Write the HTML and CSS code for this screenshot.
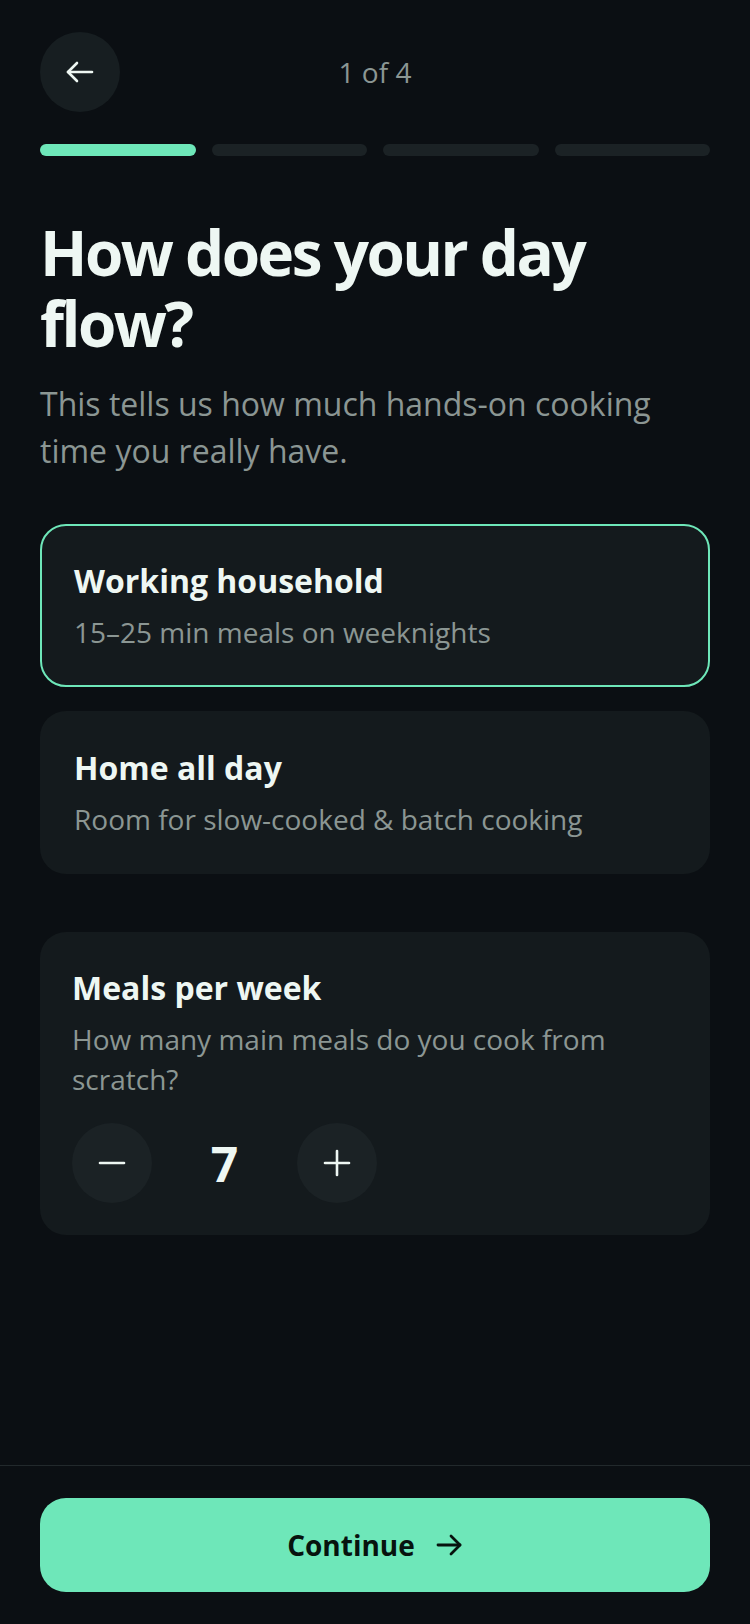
FILE: index.html
```html
<!DOCTYPE html>
<html lang="en">
<head>
<meta charset="utf-8">
<title>How does your day flow?</title>
<link rel="stylesheet" href="styles.css">
</head>
<body>
<div class="page">
  <main class="content">
    <header class="topbar">
      <button class="back" aria-label="Back">
        <svg width="28" height="28" viewBox="0 0 28 28" fill="none" stroke="currentColor" stroke-width="2.6" stroke-linecap="round" stroke-linejoin="round"><path d="M26 14H2"/><path d="M11 5l-9 9 9 9"/></svg>
      </button>
      <div class="step">1 of 4</div>
      <div class="spacer"></div>
    </header>
    <div class="progress">
      <span class="seg active"></span>
      <span class="seg"></span>
      <span class="seg"></span>
      <span class="seg"></span>
    </div>

    <h1 class="title">How does your day flow?</h1>
    <p class="lead">This tells us how much hands-on cooking time you really have.</p>

    <div class="options">
      <div class="option selected">
        <div class="option-title">Working household</div>
        <div class="option-sub">15–25 min meals on weeknights</div>
      </div>
      <div class="option">
        <div class="option-title">Home all day</div>
        <div class="option-sub">Room for slow-cooked &amp; batch cooking</div>
      </div>
    </div>

    <section class="meals">
      <div class="option-title">Meals per week</div>
      <div class="option-sub">How many main meals do you cook from scratch?</div>
      <div class="stepper">
        <button class="round" aria-label="Decrease">
          <svg width="28" height="28" viewBox="0 0 28 28" fill="none" stroke="currentColor" stroke-width="2.6" stroke-linecap="round"><path d="M2 14h24"/></svg>
        </button>
        <div class="value">7</div>
        <button class="round" aria-label="Increase">
          <svg width="28" height="28" viewBox="0 0 28 28" fill="none" stroke="currentColor" stroke-width="2.6" stroke-linecap="round"><path d="M2 14h24"/><path d="M14 2v24"/></svg>
        </button>
      </div>
    </section>
  </main>

  <footer class="footer">
    <button class="cta">
      <span>Continue</span>
      <svg width="28" height="28" viewBox="0 0 28 28" fill="none" stroke="currentColor" stroke-width="2.8" stroke-linecap="round" stroke-linejoin="round"><path d="M3 14h22"/><path d="M16 5l9 9-9 9"/></svg>
    </button>
  </footer>
</div>
</body>
</html>
```

FILE: styles.css
```css
* { box-sizing: border-box; }
html, body { margin: 0; padding: 0; }
body {
  background: #0b0f13;
  color: #eef7f3;
  font-family: "Open Sans", "Noto Sans", sans-serif;
}
button { font-family: inherit; border: none; cursor: pointer; }

.page {
  width: 750px;
  min-height: 1624px;
  display: flex;
  flex-direction: column;
}
.content {
  flex: 1;
  padding: 32px 40px 0;
}

.topbar {
  display: grid;
  grid-template-columns: 80px 1fr 80px;
  align-items: center;
  height: 80px;
}
.back {
  width: 80px;
  height: 80px;
  border-radius: 50%;
  background: #171e21;
  color: #eef7f3;
  display: flex;
  align-items: center;
  justify-content: center;
  padding: 0;
}
.step {
  text-align: center;
  font-size: 28px;
  color: #8b9693;
}

.progress {
  display: flex;
  gap: 16px;
  margin-top: 32px;
}
.seg {
  flex: 1;
  height: 12px;
  border-radius: 6px;
  background: #1b2225;
}
.seg.active { background: #6ee7b9; }

.title {
  margin: 61px 0 0;
  font-size: 62px;
  line-height: 71px;
  font-weight: 700;
  letter-spacing: -2.5px;
  color: #eef7f3;
}
.lead {
  margin: 21px 0 0;
  font-size: 32px;
  line-height: 47px;
  color: #8b9693;
}

.options {
  margin-top: 50px;
  display: flex;
  flex-direction: column;
  gap: 24px;
}
.option {
  background: #141a1d;
  border: 2px solid transparent;
  border-radius: 26px;
  padding: 36px 32px 33px;
}
.option.selected {
  border-color: #6ee7b9;
}
.option-title {
  font-size: 32px;
  line-height: 38px;
  font-weight: 700;
  color: #eef7f3;
}
.option-sub {
  margin-top: 12px;
  font-size: 28px;
  line-height: 40px;
  color: #8b9693;
}

.meals {
  margin-top: 58px;
  background: #141a1d;
  border-radius: 26px;
  padding: 37px 32px 32px;
}
.stepper {
  margin-top: 24px;
  display: flex;
  align-items: center;
  gap: 24px;
}
.round {
  width: 80px;
  height: 80px;
  border-radius: 50%;
  background: #1b2225;
  color: #eef7f3;
  display: flex;
  align-items: center;
  justify-content: center;
  padding: 0;
}
.value {
  width: 97px;
  text-align: center;
  font-size: 48px;
  font-weight: 700;
  color: #eef7f3;
}

.footer {
  border-top: 1px solid #22292c;
  padding: 32px 40px 32px;
}
.cta {
  width: 100%;
  height: 94px;
  border-radius: 26px;
  background: #6ee7b9;
  color: #07130e;
  display: flex;
  align-items: center;
  justify-content: center;
  gap: 20px;
  font-size: 28px;
  font-weight: 700;
}
```
